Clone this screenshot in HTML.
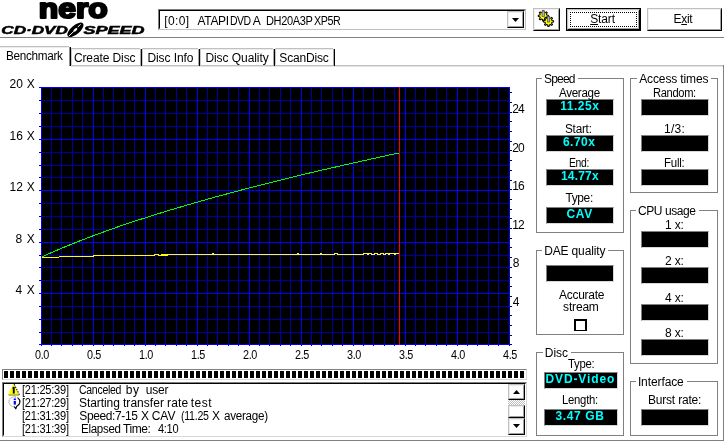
<!DOCTYPE html>
<html><head><meta charset="utf-8"><title>Nero CD-DVD Speed</title>
<style>
html,body{margin:0;padding:0;background:#fff;width:724px;height:441px;overflow:hidden}
.abs{position:absolute}
.t{position:absolute;transform-origin:0 0;white-space:pre;font-family:'Liberation Sans', sans-serif;font-size:12px;line-height:12px;color:#000}
u{text-decoration:underline;text-underline-offset:1px}
</style></head><body>
<svg class="abs" style="left:0;top:0;will-change:transform" width="150" height="37" viewBox="0 0 150 37" font-family="'Liberation Sans', sans-serif">
<text x="38.800" y="17.800" font-size="27.500" font-weight="bold" textLength="69" lengthAdjust="spacingAndGlyphs" stroke="#000" stroke-width="2.200" stroke-linejoin="round">nero</text>
<text x="1.300" y="33.900" font-size="10.700" font-weight="bold" font-style="italic" textLength="66.500" lengthAdjust="spacingAndGlyphs" stroke="#000" stroke-width=".5">CD·DVD</text>
<text x="83.600" y="33.900" font-size="10.700" font-weight="bold" font-style="italic" textLength="61" lengthAdjust="spacingAndGlyphs" stroke="#000" stroke-width=".5">SPEED</text>
<g transform="translate(75.400 29.800) rotate(-40)"><ellipse rx="9.900" ry="4.400" fill="#000"/><ellipse rx="2.300" ry="1.200" fill="#fff"/><path d="M-9 .6L-2 .2M3.500 -.500L7.500 -.900" stroke="#fff" stroke-width=".9" fill="none"/></g>
</svg>
<svg class="abs" style="left:0;top:0" width="724" height="441" shape-rendering="crispEdges"><rect x="41" y="87" width="469" height="258" fill="#000"/><rect x="51" y="87" width="1" height="258" fill="#0000a0"/><rect x="61" y="87" width="1" height="258" fill="#0000a0"/><rect x="72" y="87" width="1" height="258" fill="#0000a0"/><rect x="82" y="87" width="1" height="258" fill="#0000a0"/><rect x="103" y="87" width="1" height="258" fill="#0000a0"/><rect x="113" y="87" width="1" height="258" fill="#0000a0"/><rect x="124" y="87" width="1" height="258" fill="#0000a0"/><rect x="134" y="87" width="1" height="258" fill="#0000a0"/><rect x="155" y="87" width="1" height="258" fill="#0000a0"/><rect x="165" y="87" width="1" height="258" fill="#0000a0"/><rect x="176" y="87" width="1" height="258" fill="#0000a0"/><rect x="186" y="87" width="1" height="258" fill="#0000a0"/><rect x="207" y="87" width="1" height="258" fill="#0000a0"/><rect x="217" y="87" width="1" height="258" fill="#0000a0"/><rect x="228" y="87" width="1" height="258" fill="#0000a0"/><rect x="238" y="87" width="1" height="258" fill="#0000a0"/><rect x="259" y="87" width="1" height="258" fill="#0000a0"/><rect x="269" y="87" width="1" height="258" fill="#0000a0"/><rect x="280" y="87" width="1" height="258" fill="#0000a0"/><rect x="290" y="87" width="1" height="258" fill="#0000a0"/><rect x="311" y="87" width="1" height="258" fill="#0000a0"/><rect x="321" y="87" width="1" height="258" fill="#0000a0"/><rect x="332" y="87" width="1" height="258" fill="#0000a0"/><rect x="342" y="87" width="1" height="258" fill="#0000a0"/><rect x="363" y="87" width="1" height="258" fill="#0000a0"/><rect x="373" y="87" width="1" height="258" fill="#0000a0"/><rect x="384" y="87" width="1" height="258" fill="#0000a0"/><rect x="394" y="87" width="1" height="258" fill="#0000a0"/><rect x="415" y="87" width="1" height="258" fill="#0000a0"/><rect x="425" y="87" width="1" height="258" fill="#0000a0"/><rect x="436" y="87" width="1" height="258" fill="#0000a0"/><rect x="446" y="87" width="1" height="258" fill="#0000a0"/><rect x="467" y="87" width="1" height="258" fill="#0000a0"/><rect x="477" y="87" width="1" height="258" fill="#0000a0"/><rect x="488" y="87" width="1" height="258" fill="#0000a0"/><rect x="498" y="87" width="1" height="258" fill="#0000a0"/><rect x="41" y="100" width="469" height="1" fill="#0000a0"/><rect x="41" y="113" width="469" height="1" fill="#0000a0"/><rect x="41" y="126" width="469" height="1" fill="#0000a0"/><rect x="41" y="152" width="469" height="1" fill="#0000a0"/><rect x="41" y="165" width="469" height="1" fill="#0000a0"/><rect x="41" y="177" width="469" height="1" fill="#0000a0"/><rect x="41" y="203" width="469" height="1" fill="#0000a0"/><rect x="41" y="216" width="469" height="1" fill="#0000a0"/><rect x="41" y="229" width="469" height="1" fill="#0000a0"/><rect x="41" y="255" width="469" height="1" fill="#0000a0"/><rect x="41" y="267" width="469" height="1" fill="#0000a0"/><rect x="41" y="280" width="469" height="1" fill="#0000a0"/><rect x="41" y="306" width="469" height="1" fill="#0000a0"/><rect x="41" y="319" width="469" height="1" fill="#0000a0"/><rect x="41" y="332" width="469" height="1" fill="#0000a0"/><rect x="41" y="87" width="1" height="258" fill="#0000ff"/><rect x="93" y="87" width="1" height="258" fill="#0000ff"/><rect x="145" y="87" width="1" height="258" fill="#0000ff"/><rect x="197" y="87" width="1" height="258" fill="#0000ff"/><rect x="249" y="87" width="1" height="258" fill="#0000ff"/><rect x="301" y="87" width="1" height="258" fill="#0000ff"/><rect x="353" y="87" width="1" height="258" fill="#0000ff"/><rect x="405" y="87" width="1" height="258" fill="#0000ff"/><rect x="457" y="87" width="1" height="258" fill="#0000ff"/><rect x="509" y="87" width="1" height="258" fill="#0000ff"/><rect x="41" y="87" width="469" height="1" fill="#0000ff"/><rect x="41" y="139" width="469" height="1" fill="#0000ff"/><rect x="41" y="190" width="469" height="1" fill="#0000ff"/><rect x="41" y="242" width="469" height="1" fill="#0000ff"/><rect x="41" y="293" width="469" height="1" fill="#0000ff"/><rect x="41" y="344" width="469" height="1" fill="#0000ff"/><rect x="41" y="87" width="1" height="258" fill="#0000ff"/><rect x="509" y="87" width="1" height="258" fill="#0000ff"/><rect x="39" y="87" width="471" height="1" fill="#0000ff"/><rect x="39" y="344" width="471" height="1" fill="#0000ff"/><rect x="39" y="100" width="2" height="1" fill="#000060"/><rect x="39" y="113" width="2" height="1" fill="#000060"/><rect x="39" y="126" width="2" height="1" fill="#000060"/><rect x="39" y="139" width="2" height="1" fill="#0000c0"/><rect x="39" y="152" width="2" height="1" fill="#000060"/><rect x="39" y="165" width="2" height="1" fill="#000060"/><rect x="39" y="177" width="2" height="1" fill="#000060"/><rect x="39" y="190" width="2" height="1" fill="#0000c0"/><rect x="39" y="203" width="2" height="1" fill="#000060"/><rect x="39" y="216" width="2" height="1" fill="#000060"/><rect x="39" y="229" width="2" height="1" fill="#000060"/><rect x="39" y="242" width="2" height="1" fill="#0000c0"/><rect x="39" y="255" width="2" height="1" fill="#000060"/><rect x="39" y="267" width="2" height="1" fill="#000060"/><rect x="39" y="280" width="2" height="1" fill="#000060"/><rect x="39" y="293" width="2" height="1" fill="#0000c0"/><rect x="39" y="306" width="2" height="1" fill="#000060"/><rect x="39" y="319" width="2" height="1" fill="#000060"/><rect x="39" y="332" width="2" height="1" fill="#000060"/><rect x="41" y="345" width="1" height="1" fill="#0000c0"/><rect x="51" y="345" width="1" height="1" fill="#0000c0"/><rect x="61" y="345" width="1" height="1" fill="#0000c0"/><rect x="72" y="345" width="1" height="1" fill="#0000c0"/><rect x="82" y="345" width="1" height="1" fill="#0000c0"/><rect x="93" y="345" width="1" height="1" fill="#0000c0"/><rect x="103" y="345" width="1" height="1" fill="#0000c0"/><rect x="113" y="345" width="1" height="1" fill="#0000c0"/><rect x="124" y="345" width="1" height="1" fill="#0000c0"/><rect x="134" y="345" width="1" height="1" fill="#0000c0"/><rect x="145" y="345" width="1" height="1" fill="#0000c0"/><rect x="155" y="345" width="1" height="1" fill="#0000c0"/><rect x="165" y="345" width="1" height="1" fill="#0000c0"/><rect x="176" y="345" width="1" height="1" fill="#0000c0"/><rect x="186" y="345" width="1" height="1" fill="#0000c0"/><rect x="197" y="345" width="1" height="1" fill="#0000c0"/><rect x="207" y="345" width="1" height="1" fill="#0000c0"/><rect x="217" y="345" width="1" height="1" fill="#0000c0"/><rect x="228" y="345" width="1" height="1" fill="#0000c0"/><rect x="238" y="345" width="1" height="1" fill="#0000c0"/><rect x="249" y="345" width="1" height="1" fill="#0000c0"/><rect x="259" y="345" width="1" height="1" fill="#0000c0"/><rect x="269" y="345" width="1" height="1" fill="#0000c0"/><rect x="280" y="345" width="1" height="1" fill="#0000c0"/><rect x="290" y="345" width="1" height="1" fill="#0000c0"/><rect x="301" y="345" width="1" height="1" fill="#0000c0"/><rect x="311" y="345" width="1" height="1" fill="#0000c0"/><rect x="321" y="345" width="1" height="1" fill="#0000c0"/><rect x="332" y="345" width="1" height="1" fill="#0000c0"/><rect x="342" y="345" width="1" height="1" fill="#0000c0"/><rect x="353" y="345" width="1" height="1" fill="#0000c0"/><rect x="363" y="345" width="1" height="1" fill="#0000c0"/><rect x="373" y="345" width="1" height="1" fill="#0000c0"/><rect x="384" y="345" width="1" height="1" fill="#0000c0"/><rect x="394" y="345" width="1" height="1" fill="#0000c0"/><rect x="405" y="345" width="1" height="1" fill="#0000c0"/><rect x="415" y="345" width="1" height="1" fill="#0000c0"/><rect x="425" y="345" width="1" height="1" fill="#0000c0"/><rect x="436" y="345" width="1" height="1" fill="#0000c0"/><rect x="446" y="345" width="1" height="1" fill="#0000c0"/><rect x="457" y="345" width="1" height="1" fill="#0000c0"/><rect x="467" y="345" width="1" height="1" fill="#0000c0"/><rect x="477" y="345" width="1" height="1" fill="#0000c0"/><rect x="488" y="345" width="1" height="1" fill="#0000c0"/><rect x="498" y="345" width="1" height="1" fill="#0000c0"/><rect x="509" y="345" width="1" height="1" fill="#0000c0"/><rect x="510" y="344" width="2" height="1" fill="#000060"/><rect x="510" y="335" width="2" height="1" fill="#000060"/><rect x="510" y="325" width="2" height="1" fill="#000060"/><rect x="510" y="315" width="2" height="1" fill="#000060"/><rect x="510" y="306" width="2" height="1" fill="#000060"/><rect x="510" y="296" width="2" height="1" fill="#000060"/><rect x="510" y="286" width="2" height="1" fill="#000060"/><rect x="510" y="277" width="2" height="1" fill="#000060"/><rect x="510" y="267" width="2" height="1" fill="#000060"/><rect x="510" y="257" width="2" height="1" fill="#000060"/><rect x="510" y="247" width="2" height="1" fill="#000060"/><rect x="510" y="238" width="2" height="1" fill="#000060"/><rect x="510" y="228" width="2" height="1" fill="#000060"/><rect x="510" y="218" width="2" height="1" fill="#000060"/><rect x="510" y="209" width="2" height="1" fill="#000060"/><rect x="510" y="199" width="2" height="1" fill="#000060"/><rect x="510" y="189" width="2" height="1" fill="#000060"/><rect x="510" y="180" width="2" height="1" fill="#000060"/><rect x="510" y="170" width="2" height="1" fill="#000060"/><rect x="510" y="160" width="2" height="1" fill="#000060"/><rect x="510" y="150" width="2" height="1" fill="#000060"/><rect x="510" y="141" width="2" height="1" fill="#000060"/><rect x="510" y="131" width="2" height="1" fill="#000060"/><rect x="510" y="121" width="2" height="1" fill="#000060"/><rect x="510" y="112" width="2" height="1" fill="#000060"/><rect x="510" y="102" width="2" height="1" fill="#000060"/><rect x="510" y="92" width="2" height="1" fill="#000060"/><polyline points="41.5,257.1 44.5,255.7 47.5,254.4 50.4,253.1 53.4,251.8 56.4,250.5 59.4,249.2 62.4,247.9 65.3,246.7 68.3,245.5 71.3,244.3 74.3,243.1 77.2,241.9 80.2,240.7 83.2,239.6 86.2,238.4 89.2,237.3 92.1,236.2 95.1,235.0 98.1,233.9 101.1,232.9 104.1,231.8 107.0,230.7 110.0,229.7 113.0,228.6 116.0,227.6 118.9,226.5 121.9,225.5 124.9,224.5 127.9,223.5 130.9,222.5 133.8,221.5 136.8,220.5 139.8,219.6 142.8,218.6 145.8,217.7 148.7,216.7 151.7,215.8 154.7,214.8 157.7,213.9 160.6,213.0 163.6,212.1 166.6,211.1 169.6,210.2 172.6,209.3 175.5,208.5 178.5,207.6 181.5,206.7 184.5,205.8 187.5,204.9 190.4,204.1 193.4,203.2 196.4,202.4 199.4,201.5 202.4,200.7 205.3,199.8 208.3,199.0 211.3,198.2 214.3,197.3 217.2,196.5 220.2,195.7 223.2,194.9 226.2,194.1 229.2,193.3 232.1,192.5 235.1,191.7 238.1,190.9 241.1,190.1 244.1,189.3 247.0,188.6 250.0,187.8 253.0,187.0 256.0,186.2 258.9,185.5 261.9,184.7 264.9,184.0 267.9,183.2 270.9,182.5 273.8,181.7 276.8,181.0 279.8,180.2 282.8,179.5 285.8,178.8 288.7,178.0 291.7,177.3 294.7,176.6 297.7,175.9 300.6,175.2 303.6,174.4 306.6,173.7 309.6,173.0 312.6,172.3 315.5,171.6 318.5,170.9 321.5,170.2 324.5,169.5 327.5,168.8 330.4,168.1 333.4,167.5 336.4,166.8 339.4,166.1 342.4,165.4 345.3,164.7 348.3,164.1 351.3,163.4 354.3,162.7 357.2,162.1 360.2,161.4 363.2,160.7 366.2,160.1 369.2,159.4 372.1,158.8 375.1,158.1 378.1,157.5 381.1,156.8 384.1,156.2 387.0,155.5 390.0,154.9 393.0,154.3 396.0,153.6 398.9,153.0" fill="none" stroke="#00ff00" stroke-width="1" shape-rendering="crispEdges"/><polyline points="41.5,257.5 58.5,257.5 59.5,256.5 93,256.5 94,255.5 154,255.5 155,254.5 158,254.5 159,255.5 161,255.5 162,254.5 163,255.5 164,254.5 165,255.5 166,254.5 167,255.5 168,254.5 212,254.5 213,253.5 214,254.5 297,254.5 298,253.5 299,254.5 320,254.5 321,253.5 322,254.5 334,254.5 335,253.5 337,253.5 338,254.5 363,254.5 364,253.5 367,253.5 368,254.5 369,253.5 371,253.5 372,254.5 374,254.5 375,253.5 377,253.5 378,254.5 380,254.5 381,253.5 383,253.5 384,254.5 385,254.5 386,253.5 388,253.5 389,254.5 390,253.5 394,253.5 395,254.5 396,253.5 399,253.5" fill="none" stroke="#ffff00" stroke-width="1" shape-rendering="crispEdges"/><rect x="399" y="87" width="1" height="258" fill="#ff0000"/></svg>
<div class="abs" style="left:0px;top:37px;width:724px;height:1px;background:#808080"></div><div class="abs" style="left:158px;top:9px;width:368px;height:21px;box-sizing:border-box;border:1px solid;border-color:#808080 #c0c0c0 #c0c0c0 #808080;background:#fff"><div style="position:absolute;left:0;top:0;right:0;bottom:0;border:1px solid;border-color:#000 #fff #fff #000"></div></div><div class="abs" style="left:507px;top:11px;width:17px;height:17px;box-sizing:border-box;background:#fff;border:1px solid;border-color:#c0c0c0 #000 #000 #c0c0c0"><div style="position:absolute;left:0;top:0;right:0;bottom:0;border:1px solid;border-color:#ececec #a0a0a0 #a0a0a0 #ececec"></div><svg style="position:absolute;left:4px;top:6px" width="8" height="5"><path d="M0 0h7l-3.5 4z" fill="#000"/></svg></div><div class="abs" style="left:533px;top:8px;width:27px;height:23px;box-sizing:border-box;border:1px solid;border-color:#c0c0c0 #000 #000 #c0c0c0;background:#fff"><div style="position:absolute;left:0;top:0;right:0;bottom:0;border:1px solid;border-color:#f0f0f0 #a0a0a0 #a0a0a0 #f0f0f0"></div></div><div class="abs" style="left:566px;top:8px;width:75px;height:23px;box-sizing:border-box;border:1px solid #000;background:#fff"><div style="position:absolute;left:0;top:0;right:0;bottom:0;border:1px solid;border-color:#c0c0c0 #000 #000 #c0c0c0"></div><div style="position:absolute;left:1px;top:1px;right:1px;bottom:1px;border:1px solid;border-color:#f0f0f0 #a0a0a0 #a0a0a0 #f0f0f0"></div><div style="position:absolute;left:3px;top:3px;right:3px;bottom:3px;border:1px dotted #000"></div></div><div class="abs" style="left:647px;top:8px;width:75px;height:23px;box-sizing:border-box;border:1px solid;border-color:#c0c0c0 #000 #000 #c0c0c0;background:#fff"><div style="position:absolute;left:0;top:0;right:0;bottom:0;border:1px solid;border-color:#f0f0f0 #a0a0a0 #a0a0a0 #f0f0f0"></div></div><svg class="abs" style="left:535px;top:9px" width="24" height="21" viewBox="0 0 24 21">
<g stroke="#000" stroke-width="1.05" fill="#ffff00" stroke-linejoin="round">
<path d="M11.80 6.06L13.36 6.26L13.36 7.54L11.80 7.74L11.37 8.78L12.33 10.03L11.43 10.93L10.18 9.97L9.14 10.40L8.94 11.96L7.66 11.96L7.46 10.40L6.42 9.97L5.17 10.93L4.27 10.03L5.23 8.78L4.80 7.74L3.24 7.54L3.24 6.26L4.80 6.06L5.23 5.02L4.27 3.77L5.17 2.87L6.42 3.83L7.46 3.40L7.66 1.84L8.94 1.84L9.14 3.40L10.18 3.83L11.43 2.87L12.33 3.77L11.37 5.02Z"/>
<path d="M17.00 11.56L18.56 11.76L18.56 13.04L17.00 13.24L16.57 14.28L17.53 15.53L16.63 16.43L15.38 15.47L14.34 15.90L14.14 17.46L12.86 17.46L12.66 15.90L11.62 15.47L10.37 16.43L9.47 15.53L10.43 14.28L10.00 13.24L8.44 13.04L8.44 11.76L10.00 11.56L10.43 10.52L9.47 9.27L10.37 8.37L11.62 9.33L12.66 8.90L12.86 7.34L14.14 7.34L14.34 8.90L15.38 9.33L16.63 8.37L17.53 9.27L16.57 10.52Z"/>
</g>

<rect x="7.100" y="1.900" width="2.400" height="5.600" fill="#b0b0b8" stroke="#505050" stroke-width=".7"/>
<rect x="12.300" y="7.400" width="2.400" height="5.600" fill="#b0b0b8" stroke="#505050" stroke-width=".7"/>
</svg><div class="abs" style="left:71px;top:65px;width:653px;height:1px;background:#c0c0c0"></div><div class="abs" style="left:71px;top:66px;width:652px;height:1px;background:#e4e4e4"></div><div class="abs" style="left:723px;top:65px;width:1px;height:376px;background:#808080"></div><div class="abs" style="left:0px;top:440px;width:724px;height:1px;background:#808080"></div><div class="abs" style="left:0px;top:46px;width:69px;height:1px;background:#c0c0c0"></div><div class="abs" style="left:0px;top:47px;width:68px;height:1px;background:#ececec"></div><div class="abs" style="left:69px;top:47px;width:1px;height:19px;background:#909090"></div><div class="abs" style="left:70px;top:47px;width:1px;height:19px;background:#000"></div><div class="abs" style="left:71px;top:48px;width:69px;height:1px;background:#c0c0c0"></div><div class="abs" style="left:72px;top:49px;width:68px;height:1px;background:#ececec"></div><div class="abs" style="left:71px;top:48px;width:1px;height:18px;background:#c8c8c8"></div><div class="abs" style="left:140px;top:49px;width:1px;height:17px;background:#a8a8a8"></div><div class="abs" style="left:141px;top:49px;width:1px;height:17px;background:#000"></div><div class="abs" style="left:142px;top:48px;width:56px;height:1px;background:#c0c0c0"></div><div class="abs" style="left:143px;top:49px;width:55px;height:1px;background:#ececec"></div><div class="abs" style="left:142px;top:48px;width:1px;height:18px;background:#c8c8c8"></div><div class="abs" style="left:198px;top:49px;width:1px;height:17px;background:#a8a8a8"></div><div class="abs" style="left:199px;top:49px;width:1px;height:17px;background:#000"></div><div class="abs" style="left:200px;top:48px;width:73px;height:1px;background:#c0c0c0"></div><div class="abs" style="left:201px;top:49px;width:72px;height:1px;background:#ececec"></div><div class="abs" style="left:200px;top:48px;width:1px;height:18px;background:#c8c8c8"></div><div class="abs" style="left:273px;top:49px;width:1px;height:17px;background:#a8a8a8"></div><div class="abs" style="left:274px;top:49px;width:1px;height:17px;background:#000"></div><div class="abs" style="left:275px;top:48px;width:58px;height:1px;background:#c0c0c0"></div><div class="abs" style="left:276px;top:49px;width:57px;height:1px;background:#ececec"></div><div class="abs" style="left:275px;top:48px;width:1px;height:18px;background:#c8c8c8"></div><div class="abs" style="left:333px;top:49px;width:1px;height:17px;background:#a8a8a8"></div><div class="abs" style="left:334px;top:49px;width:1px;height:17px;background:#000"></div><div class="abs" style="left:536px;top:78px;width:88px;height:155px;box-sizing:border-box;border:1px solid #808080"></div><div class="abs" style="left:630px;top:78px;width:88px;height:115px;box-sizing:border-box;border:1px solid #808080"></div><div class="abs" style="left:630px;top:210px;width:88px;height:154px;box-sizing:border-box;border:1px solid #808080"></div><div class="abs" style="left:536px;top:250px;width:88px;height:85px;box-sizing:border-box;border:1px solid #808080"></div><div class="abs" style="left:536px;top:352px;width:88px;height:84px;box-sizing:border-box;border:1px solid #808080"></div><div class="abs" style="left:630px;top:381px;width:88px;height:55px;box-sizing:border-box;border:1px solid #808080"></div><div class="abs" style="left:546px;top:99px;width:68px;height:17px;box-sizing:border-box;background:#000;border:1px solid;border-color:#808080 #d8d8d8 #d8d8d8 #808080"></div><div class="abs" style="left:546px;top:135px;width:68px;height:17px;box-sizing:border-box;background:#000;border:1px solid;border-color:#808080 #d8d8d8 #d8d8d8 #808080"></div><div class="abs" style="left:546px;top:169px;width:68px;height:17px;box-sizing:border-box;background:#000;border:1px solid;border-color:#808080 #d8d8d8 #d8d8d8 #808080"></div><div class="abs" style="left:546px;top:207px;width:68px;height:17px;box-sizing:border-box;background:#000;border:1px solid;border-color:#808080 #d8d8d8 #d8d8d8 #808080"></div><div class="abs" style="left:641px;top:99px;width:68px;height:17px;box-sizing:border-box;background:#000;border:1px solid;border-color:#808080 #d8d8d8 #d8d8d8 #808080"></div><div class="abs" style="left:641px;top:135px;width:68px;height:17px;box-sizing:border-box;background:#000;border:1px solid;border-color:#808080 #d8d8d8 #d8d8d8 #808080"></div><div class="abs" style="left:641px;top:169px;width:68px;height:17px;box-sizing:border-box;background:#000;border:1px solid;border-color:#808080 #d8d8d8 #d8d8d8 #808080"></div><div class="abs" style="left:641px;top:231px;width:68px;height:17px;box-sizing:border-box;background:#000;border:1px solid;border-color:#808080 #d8d8d8 #d8d8d8 #808080"></div><div class="abs" style="left:641px;top:267px;width:68px;height:17px;box-sizing:border-box;background:#000;border:1px solid;border-color:#808080 #d8d8d8 #d8d8d8 #808080"></div><div class="abs" style="left:641px;top:304px;width:68px;height:17px;box-sizing:border-box;background:#000;border:1px solid;border-color:#808080 #d8d8d8 #d8d8d8 #808080"></div><div class="abs" style="left:641px;top:339px;width:68px;height:17px;box-sizing:border-box;background:#000;border:1px solid;border-color:#808080 #d8d8d8 #d8d8d8 #808080"></div><div class="abs" style="left:641px;top:409px;width:68px;height:17px;box-sizing:border-box;background:#000;border:1px solid;border-color:#808080 #d8d8d8 #d8d8d8 #808080"></div><div class="abs" style="left:546px;top:265px;width:68px;height:17px;box-sizing:border-box;background:#000;border:1px solid;border-color:#808080 #d8d8d8 #d8d8d8 #808080"></div><div class="abs" style="left:544px;top:372px;width:74px;height:17px;box-sizing:border-box;background:#000;border:1px solid;border-color:#808080 #d8d8d8 #d8d8d8 #808080"></div><div class="abs" style="left:544px;top:409px;width:74px;height:17px;box-sizing:border-box;background:#000;border:1px solid;border-color:#808080 #d8d8d8 #d8d8d8 #808080"></div><div class="abs" style="left:574px;top:319px;width:13px;height:12px;box-sizing:border-box;border:2px solid #000;border-bottom-width:1px;background:#fff"></div><div class="abs" style="left:2px;top:369px;width:525px;height:11px;box-sizing:border-box;border:1px solid;border-color:#808080 #d8d8d8 #d8d8d8 #808080;background:#fff"><div style="position:absolute;left:1px;top:1px;width:521px;height:7px;background:repeating-linear-gradient(90deg,#000 0,#000 4px,#fff 4px,#fff 6px)"></div></div><div class="abs" style="left:2px;top:382px;width:525px;height:55px;box-sizing:border-box;border:1px solid;border-color:#808080 #d8d8d8 #d8d8d8 #808080;background:#fff"><div style="position:absolute;left:0;top:0;right:0;bottom:0;border:1px solid;border-color:#000 #fff #fff #000"></div></div><div class="abs" style="left:508px;top:384px;width:17px;height:51px;background:#fff"></div><div class="abs" style="left:508px;top:400px;width:17px;height:5px;background:repeating-conic-gradient(#c0c0c0 0 25%,#fff 0 50%) 0 0/2px 2px"></div><div class="abs" style="left:508px;top:384px;width:17px;height:16px;box-sizing:border-box;background:#fff;border:1px solid;border-color:#c0c0c0 #000 #000 #c0c0c0"><div style="position:absolute;left:0;top:0;right:0;bottom:0;border:1px solid;border-color:#ececec #a0a0a0 #a0a0a0 #ececec"></div><svg style="position:absolute;left:4px;top:5px" width="8" height="5"><path d="M0 4h7l-3.5-4z" fill="#000"/></svg></div><div class="abs" style="left:508px;top:405px;width:17px;height:13px;box-sizing:border-box;background:#fff;border:1px solid;border-color:#c0c0c0 #000 #000 #c0c0c0"><div style="position:absolute;left:0;top:0;right:0;bottom:0;border:1px solid;border-color:#ececec #a0a0a0 #a0a0a0 #ececec"></div></div><div class="abs" style="left:508px;top:418px;width:17px;height:17px;box-sizing:border-box;background:#fff;border:1px solid;border-color:#c0c0c0 #000 #000 #c0c0c0"><div style="position:absolute;left:0;top:0;right:0;bottom:0;border:1px solid;border-color:#ececec #a0a0a0 #a0a0a0 #ececec"></div><svg style="position:absolute;left:4px;top:5px" width="8" height="5"><path d="M0 0h7l-3.5 4z" fill="#000"/></svg></div><svg class="abs" style="left:7px;top:383px" width="14" height="13" viewBox="0 0 14 13">
<path d="M6.300.7L1 11.500h10.600z" fill="#ffff00"/>
<path d="M1.500 12h10.500" stroke="#808000" stroke-width="1" fill="none"/>
<path d="M7.200 1.300l5.200 10.500" fill="none" stroke="#000" stroke-width="1.100" stroke-dasharray="1.400 1.200"/>
<path d="M5 5l1.300-1.200h1.400v6.800h-1.900v-5z" fill="#000"/></svg><svg class="abs" style="left:7.500px;top:396px" width="14" height="14" viewBox="0 0 14 14">
<path d="M6.700 .9a5.500 4.900 0 1 0 -.5 9.800l1.600 2 .9-2.500a5.500 4.900 0 0 0 -2 -9.300z" fill="#fff" stroke="#707070" stroke-width=".9" stroke-dasharray="1.200 1"/>
<path d="M9.800 1.900a5.500 4.900 0 0 1 -1.100 8.300l-.9 2.500-1.600-2" fill="none" stroke="#000" stroke-width="1.100"/>
<rect x="5.700" y="2.500" width="2.200" height="1.600" fill="#0000ff"/><rect x="5.700" y="5" width="2.200" height="3.600" fill="#0000ff"/></svg>
<div id="tx" style="position:absolute;left:0;top:0;width:724px;height:441px;will-change:transform">
<span class="t" style="left:5.8px;top:50px;letter-spacing:-0.31px;transform:scaleX(0.979);">Benchmark</span>
<span class="t" style="left:73.9px;top:52px;letter-spacing:-0.10px;">Create Disc</span>
<span class="t" style="left:147.4px;top:52px;letter-spacing:-0.07px;">Disc Info</span>
<span class="t" style="left:205.4px;top:52px;letter-spacing:-0.06px;">Disc Quality</span>
<span class="t" style="left:279.3px;top:52px;letter-spacing:-0.17px;">ScanDisc</span>
<span class="t" style="left:164.2px;top:15px;letter-spacing:0.41px;">[0:0]</span>
<span class="t" style="left:197.5px;top:15px;letter-spacing:-0.33px;">ATAPI</span>
<span class="t" style="left:230.3px;top:15px;letter-spacing:-0.58px;transform:scaleX(0.873);">DVD</span>
<span class="t" style="left:252.7px;top:15px;">A</span>
<span class="t" style="left:265.7px;top:15px;letter-spacing:-0.39px;transform:scaleX(0.919);">DH20A3P</span>
<span class="t" style="left:313.8px;top:15px;letter-spacing:-0.47px;transform:scaleX(0.895);">XP5R</span>
<span class="t" style="left:590.2px;top:13px;letter-spacing:-0.14px;"><u>S</u>tart</span>
<span class="t" style="left:673.6px;top:13px;letter-spacing:-0.34px;">E<u>x</u>it</span>
<span class="t" style="left:9.5px;top:78px;letter-spacing:0.17px;">20 X</span>
<span class="t" style="left:9.5px;top:130px;letter-spacing:0.17px;">16 X</span>
<span class="t" style="left:9.5px;top:181px;letter-spacing:0.17px;">12 X</span>
<span class="t" style="left:15.5px;top:233px;letter-spacing:0.59px;">8 X</span>
<span class="t" style="left:15.5px;top:284px;letter-spacing:0.59px;">4 X</span>
<span class="t" style="left:512.2px;top:103px;letter-spacing:-0.76px;">24</span>
<span class="t" style="left:512.2px;top:142px;letter-spacing:-0.76px;">20</span>
<span class="t" style="left:512.2px;top:180px;letter-spacing:-0.76px;">16</span>
<span class="t" style="left:512.2px;top:219px;letter-spacing:-0.76px;">12</span>
<span class="t" style="left:512.8px;top:257px;">8</span>
<span class="t" style="left:512.8px;top:296px;">4</span>
<span class="t" style="left:35.3px;top:349px;letter-spacing:-0.37px;transform:scaleX(0.903);">0.0</span>
<span class="t" style="left:87.3px;top:349px;letter-spacing:-0.37px;transform:scaleX(0.903);">0.5</span>
<span class="t" style="left:139.3px;top:349px;letter-spacing:-0.37px;transform:scaleX(0.903);">1.0</span>
<span class="t" style="left:191.3px;top:349px;letter-spacing:-0.37px;transform:scaleX(0.903);">1.5</span>
<span class="t" style="left:243.3px;top:349px;letter-spacing:-0.37px;transform:scaleX(0.903);">2.0</span>
<span class="t" style="left:295.3px;top:349px;letter-spacing:-0.37px;transform:scaleX(0.903);">2.5</span>
<span class="t" style="left:347.3px;top:349px;letter-spacing:-0.37px;transform:scaleX(0.903);">3.0</span>
<span class="t" style="left:399.3px;top:349px;letter-spacing:-0.37px;transform:scaleX(0.903);">3.5</span>
<span class="t" style="left:451.3px;top:349px;letter-spacing:-0.37px;transform:scaleX(0.903);">4.0</span>
<span class="t" style="left:503.3px;top:349px;letter-spacing:-0.37px;transform:scaleX(0.903);">4.5</span>
<span class="t" style="left:22.0px;top:384px;letter-spacing:-0.26px;transform:scaleX(0.920);">[21:25:39]</span>
<span class="t" style="left:22.0px;top:397px;letter-spacing:-0.26px;transform:scaleX(0.920);">[21:27:29]</span>
<span class="t" style="left:22.0px;top:410px;letter-spacing:-0.26px;transform:scaleX(0.920);">[21:31:39]</span>
<span class="t" style="left:22.0px;top:423px;letter-spacing:-0.26px;transform:scaleX(0.920);">[21:31:39]</span>
<span class="t" style="left:79.0px;top:384px;letter-spacing:-0.33px;transform:scaleX(0.876);">Canceled</span>
<span class="t" style="left:125.8px;top:384px;letter-spacing:0.60px;">by</span>
<span class="t" style="left:145.8px;top:384px;letter-spacing:-0.21px;">user</span>
<span class="t" style="left:79.0px;top:397px;letter-spacing:-0.07px;">Starting</span>
<span class="t" style="left:123.0px;top:397px;letter-spacing:0.03px;">transfer</span>
<span class="t" style="left:167.1px;top:397px;letter-spacing:0.17px;">rate</span>
<span class="t" style="left:190.8px;top:397px;letter-spacing:0.49px;">test</span>
<span class="t" style="left:79.3px;top:410px;letter-spacing:-0.38px;">Speed:7-15</span>
<span class="t" style="left:141.0px;top:410px;">X</span>
<span class="t" style="left:151.7px;top:410px;">CAV</span>
<span class="t" style="left:180.7px;top:410px;letter-spacing:-0.30px;transform:scaleX(0.882);">(11.25</span>
<span class="t" style="left:211.9px;top:410px;">X</span>
<span class="t" style="left:223.8px;top:410px;letter-spacing:-0.28px;transform:scaleX(0.973);">average)</span>
<span class="t" style="left:80.5px;top:423px;letter-spacing:-0.30px;transform:scaleX(0.962);">Elapsed</span>
<span class="t" style="left:123.0px;top:423px;letter-spacing:-0.42px;">Time:</span>
<span class="t" style="left:158.0px;top:423px;letter-spacing:-0.34px;transform:scaleX(0.922);">4:10</span>
<span class="t" style="left:544.0px;top:73px;letter-spacing:-0.80px;background:#fff;padding:0 3px 0 2px;margin-left:-2px">Speed</span>
<span class="t" style="left:559.4px;top:87px;letter-spacing:-0.31px;transform:scaleX(0.966);">Average</span>
<span class="t" style="left:560.2px;top:100px;font-weight:bold;color:#00ffff;letter-spacing:0.55px;">11.25x</span>
<span class="t" style="left:564.9px;top:123px;letter-spacing:-0.23px;transform:scaleX(0.978);">Start:</span>
<span class="t" style="left:562.9px;top:136px;font-weight:bold;color:#00ffff;letter-spacing:0.49px;">6.70x</span>
<span class="t" style="left:569.2px;top:157px;letter-spacing:-0.38px;transform:scaleX(0.866);">End:</span>
<span class="t" style="left:561.0px;top:170px;font-weight:bold;color:#00ffff;letter-spacing:0.18px;">14.77x</span>
<span class="t" style="left:565.5px;top:192px;letter-spacing:-0.41px;">Type:</span>
<span class="t" style="left:566.6px;top:208px;font-weight:bold;color:#00ffff;letter-spacing:0.60px;">CAV</span>
<span class="t" style="left:639.2px;top:73px;letter-spacing:-0.12px;background:#fff;padding:0 3px 0 2px;margin-left:-2px">Access times</span>
<span class="t" style="left:652.8px;top:87px;letter-spacing:-0.35px;transform:scaleX(0.927);">Random:</span>
<span class="t" style="left:664.0px;top:123px;letter-spacing:0.26px;">1/3:</span>
<span class="t" style="left:664.0px;top:157px;letter-spacing:-0.24px;transform:scaleX(0.957);">Full:</span>
<span class="t" style="left:637.9px;top:205px;letter-spacing:-0.41px;background:#fff;padding:0 3px 0 2px;margin-left:-2px">CPU usage</span>
<span class="t" style="left:665.0px;top:219px;letter-spacing:-0.18px;">1 x:</span>
<span class="t" style="left:665.0px;top:255px;letter-spacing:-0.18px;">2 x:</span>
<span class="t" style="left:665.0px;top:292px;letter-spacing:-0.18px;">4 x:</span>
<span class="t" style="left:665.0px;top:327px;letter-spacing:-0.18px;">8 x:</span>
<span class="t" style="left:637.9px;top:376px;letter-spacing:-0.10px;background:#fff;padding:0 3px 0 2px;margin-left:-2px">Interface</span>
<span class="t" style="left:648.0px;top:394px;letter-spacing:-0.20px;">Burst rate:</span>
<span class="t" style="left:544.2px;top:245px;letter-spacing:-0.15px;background:#fff;padding:0 3px 0 2px;margin-left:-2px">DAE quality</span>
<span class="t" style="left:558.9px;top:289px;letter-spacing:-0.25px;">Accurate</span>
<span class="t" style="left:563.1px;top:301px;letter-spacing:-0.18px;">stream</span>
<span class="t" style="left:544.8px;top:347px;letter-spacing:-0.08px;background:#fff;padding:0 3px 0 2px;margin-left:-2px">Disc</span>
<span class="t" style="left:567.7px;top:358px;letter-spacing:-0.31px;transform:scaleX(0.946);">Type:</span>
<span class="t" style="left:545.5px;top:373px;font-weight:bold;color:#00ffff;letter-spacing:0.88px;">DVD-Video</span>
<span class="t" style="left:561.7px;top:394px;letter-spacing:-0.28px;transform:scaleX(0.944);">Length:</span>
<span class="t" style="left:555.6px;top:410px;font-weight:bold;color:#00ffff;letter-spacing:0.60px;">3.47 GB</span>
</div>
</body></html>
